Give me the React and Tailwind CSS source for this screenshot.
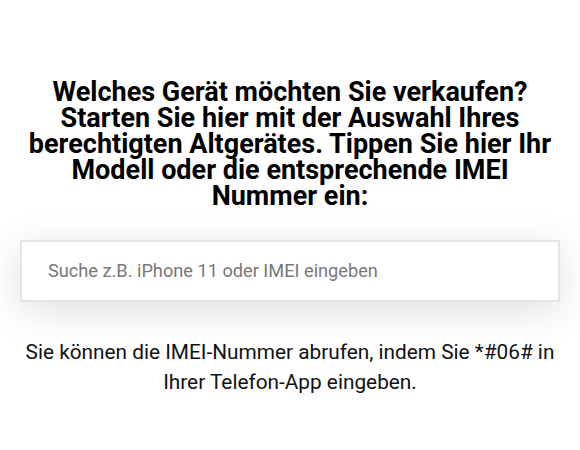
export default function App() {
  return (
    <div className="w-[580px] h-[450px] bg-white overflow-hidden" style={{ fontFamily: "Roboto, 'Noto Sans', sans-serif" }}>
      <div className="pt-[79px] px-[20px]">
        <h1 className="text-center font-bold text-[27px] leading-[26px] text-black">
          Welches Gerät möchten Sie verkaufen? Starten Sie hier mit der Auswahl Ihres berechtigten Altgerätes. Tippen Sie hier Ihr Modell oder die entsprechende IMEI Nummer ein:
        </h1>
        <div className="mt-[31px] h-[62px] border-2 border-[#e4e4e4] bg-white flex items-center pl-[26px] shadow-[0_8px_40px_rgba(0,0,0,0.13)]">
          <span className="text-[18.2px] text-[#777]">Suche z.B. iPhone 11 oder IMEI eingeben</span>
        </div>
        <p className="mt-[35px] text-center text-[20.8px] leading-[30px] text-[#111]">
          Sie können die IMEI-Nummer abrufen, indem Sie *#06# in Ihrer Telefon-App eingeben.
        </p>
      </div>
    </div>
  );
}
